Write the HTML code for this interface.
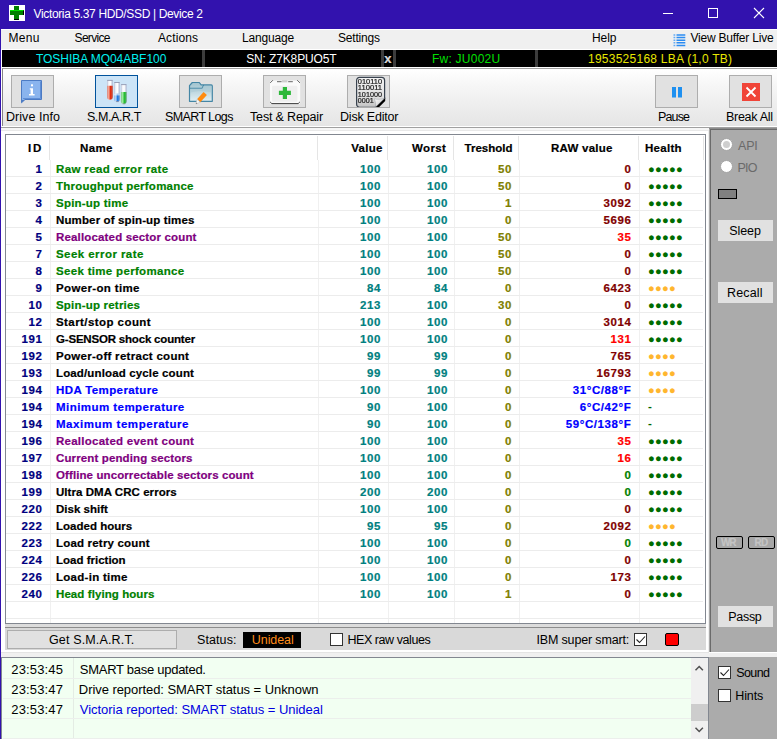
<!DOCTYPE html>
<html lang="en"><head><meta charset="utf-8"><title>Victoria 5.37 HDD/SSD | Device 2</title>
<style>
html,body{margin:0;padding:0;background:#fff}
body{width:777px;height:739px;overflow:hidden;position:relative;font-family:'Liberation Sans',sans-serif}
#win{position:absolute;left:0;top:0;width:777px;height:739px;overflow:hidden;background:#fff}
#win *{box-sizing:border-box}
.t{position:absolute;white-space:pre;line-height:16px;height:16px}
.b{font-weight:700;-webkit-text-stroke:.2px}
.lb{position:absolute;left:0;top:0;width:1px;height:739px;background:#3212ae}
.titlebar{position:absolute;left:0;top:0;width:777px;height:29px;background:#3212ae}
.appicon{position:absolute;left:9px;top:5px;width:16px;height:16px;background:#fff}
.appicon i{position:absolute;display:block;background:#008000}
.appicon .v{left:5px;top:1px;width:5px;height:14px}
.appicon .h{left:1px;top:5px;width:14px;height:5px}
.appicon .hl{left:1px;top:5px;width:13px;height:1px;background:#00e000}
.appicon .vb{left:5px;top:14px;width:5px;height:1px;background:#000}
.appicon .hr{left:14px;top:6px;width:1px;height:4px;background:#000}
.wbtn{position:absolute;top:0}
.menubar{position:absolute;left:1px;top:29px;width:776px;height:21px;background:#f0f0f0;border-top:1px solid #fff;border-bottom:1px solid #fff}
.menubar .t,.infobar .t,.toolbar .t,.titlebar .t{}
.vbicon{position:absolute}
.infobar{position:absolute;left:2px;top:50px;width:775px;height:17px;background:#000}
.isep{position:absolute;top:0;width:3px;height:17px;background:#3c3c3c}
.toolbar{position:absolute;left:2px;top:68px;width:775px;height:58px;border-top:1px solid #a0a0a0;border-left:1px solid #858585;background:linear-gradient(#fff,#f6f6f6 30%,#e5e5e5)}
.tline{position:absolute;left:1px;top:126px;width:776px;height:5px;background:#f6f6f6;border-top:1px solid #fff;border-bottom:1px solid #e8e8e8}
.tline i{display:block;height:1px;background:#a0a0a0}
.tbtn{position:absolute;width:43px;height:33px;border:1px solid #adadad;background:#e1e1e1}
.tbtn.sel{border:1px solid #00529c;background:#cce4f7}
.tbtn svg{position:absolute;left:0;top:0}
.main{position:absolute;left:1px;top:131px;width:708px;height:521px;background:#fff;border-right:1px solid #eee}
.band{position:absolute;left:1px;top:652px;width:776px;height:5px;background:#f0f0f0;border-top:1px solid #e4e4e4}
.band i{position:absolute;left:708px;top:-1px;width:68px;height:1px;background:#fff}
.grid{position:absolute;width:701px;height:490px;border:1px solid #828790;background:#fff}
.hs{position:absolute;width:1px;height:24px;background:#e5e5e5}
.bs{position:absolute;width:1px;height:463px;background:#f0f0f0}
.rl{position:absolute;left:0;width:697px;height:1px;background:#ececec}
.dots{position:absolute;height:17px;line-height:17px;font-family:'Liberation Sans','DejaVu Sans',sans-serif;font-size:11.2px;letter-spacing:.22px;white-space:pre}
.dash{position:absolute;height:17px;line-height:17px;font-size:11.500px;font-weight:700;color:#006400}
.status{position:absolute;width:701px;height:26px;background:#d9d9d9;border-top:3px solid #dcdcdc}
.status:before{content:'';position:absolute;left:0;top:0;width:701px;height:1px;background:#8c8c8c}
.getbtn{position:absolute;width:170px;height:19px;border:1px solid #adadad;background:#e1e1e1}
.unideal{position:absolute;width:58px;height:16px;background:#000}
.cb{position:absolute;width:13px;height:13px;border:1px solid #333;background:#fff}
.cb svg{position:absolute;left:0;top:0}
.redbox{position:absolute;width:14px;height:13px;border:1px solid #000;border-radius:2px;background:#ff0000}
.rpanel{position:absolute;left:709px;top:128px;width:68px;height:524px;background:#ababab;border-left:2px solid #6a6a6a;border-top:2px solid #6a6a6a;border-left-color:#6a6a6a}
.rpanel:before{content:'';position:absolute;left:-2px;top:-2px;width:68px;height:1px;background:#8c8c8c}
.rpanel:after{content:'';position:absolute;left:-2px;top:-1px;width:1px;height:523px;background:#a8a8a8}
.radio{position:absolute;width:13px;height:13px;border-radius:50%;background:#fff;border:1px solid #a4a4a4}
.radio i{position:absolute;left:2px;top:2px;width:7px;height:7px;border-radius:50%;background:#cfcfcf}
.led{position:absolute;width:19px;height:10px;border:1px solid #000;background:#808080}
.pbtn{position:absolute;width:55px;height:21px;background:#e1e1e1}
.wr{position:absolute;width:27px;height:13px;border:1px solid #000;border-radius:2px;background:#a6a6a6}
.log{position:absolute;left:1px;top:657px;width:708px;height:82px;background:#f2fff2;border-top:1px solid #828790;border-left:1px solid #828790;border-right:1px solid #828790}
.lsep{position:absolute;width:1px;height:81px;background:#e4ece4}
.ll{position:absolute;width:688px;height:1px;background:#ecefec}
.sbar{position:absolute;width:17px;height:81px;background:#f0f0f0}
.thumb{position:absolute;left:0;top:46px;width:17px;height:17px;background:#cdcdcd}
.lr{position:absolute;left:709px;top:657px;width:68px;height:82px;background:#ababab}
</style></head>
<body><div id="win">
<div class="titlebar">
<div class="appicon"><i class="v"></i><i class="h"></i><i class="hl"></i><i class="vb"></i><i class="hr"></i></div>
<span class="t" style="left:33.50px;top:5.84px;font-size:12px;color:#fff;letter-spacing:-0.35px">Victoria 5.37 HDD/SSD | Device 2</span>
<svg class="wbtn" style="left:655px" width="30" height="29" viewBox="0 0 30 29"><path d="M8 13.5h10" stroke="#fff" stroke-width="1" fill="none"/></svg>
<svg class="wbtn" style="left:700px" width="30" height="29" viewBox="0 0 30 29"><rect x="8.5" y="8.5" width="9" height="9" stroke="#fff" stroke-width="1" fill="none"/></svg>
<svg class="wbtn" style="left:745px" width="30" height="29" viewBox="0 0 30 29"><path d="M9 8l10 10M19 8l-10 10" stroke="#fff" stroke-width="1.1" fill="none"/></svg>
</div>
<div class="menubar">
<span class="t" style="left:7.50px;top:-0.16px;font-size:12px;color:#000;letter-spacing:0.29px">Menu</span>
<span class="t" style="left:73.60px;top:-0.16px;font-size:12px;color:#000;letter-spacing:-0.71px">Service</span>
<span class="t" style="left:157.00px;top:-0.16px;font-size:12px;color:#000;letter-spacing:0.11px">Actions</span>
<span class="t" style="left:241.00px;top:-0.16px;font-size:12px;color:#000;letter-spacing:-0.17px">Language</span>
<span class="t" style="left:337.00px;top:-0.16px;font-size:12px;color:#000;letter-spacing:-0.19px">Settings</span>
<span class="t" style="left:591.00px;top:-0.16px;font-size:12px;color:#000;letter-spacing:-0.10px">Help</span>
<span class="t" style="left:689.40px;top:-0.16px;font-size:12px;color:#000;letter-spacing:-0.20px">View Buffer Live</span>
<svg class="vbicon" style="left:671.5px;top:3px" width="13" height="14" viewBox="0 0 13 14"><g stroke="#2b8cf2" stroke-width="1.500"><path d="M3.500 1.900h8.800M3.500 4.550h8.800M3.500 7.200h8.800M3.500 9.850h8.800M3.500 12.500h8.800"/><path d="M.5 1.900h1.800M.5 4.550h1.800M.5 7.200h1.800M.5 9.850h1.800M.5 12.500h1.800" stroke="#63abf5"/></g></svg>
</div>
<div class="infobar">
<i class="isep" style="left:200px"></i>
<i class="isep" style="left:379px"></i>
<i class="isep" style="left:391px"></i>
<i class="isep" style="left:533px"></i>
<span class="t" style="left:34.00px;top:0.84px;font-size:12px;color:#00f0f0;letter-spacing:-0.05px">TOSHIBA MQ04ABF100</span>
<span class="t" style="left:244.20px;top:0.84px;font-size:12px;color:#fff;letter-spacing:-0.13px">SN: Z7K8PUO5T</span>
<span class="t b" style="left:382.30px;top:0.50px;font-size:13px;color:#d8d8d8;letter-spacing:0.00px">x</span>
<span class="t" style="left:429.90px;top:0.84px;font-size:12px;color:#00e000;letter-spacing:0.25px">Fw: JU002U</span>
<span class="t" style="left:586.00px;top:0.84px;font-size:12px;color:#e8e800;letter-spacing:0.25px">1953525168 LBA (1,0 TB)</span>
</div>
<div class="toolbar">
<div class="tbtn" style="left:8px;top:6px"><svg width="41" height="31" viewBox="0 0 41 31"><path d="M9.500 4.500h20v19h-16.500l-3.500 3.300z" fill="#8ab4ee" stroke="#4c7bc4" stroke-width="1"/><path d="M10 26.300v-2.300h2.600z" fill="#4c7bc4"/><path d="M11 22.500h17.500v-17" fill="none" stroke="#5f8ed6" stroke-width="1"/><rect x="19" y="8.300" width="2" height="2" fill="#fff"/><path d="M17.800 12.200h3.200v5.800h1.600v1.400h-5.600v-1.400h1.600v-4.400h-0.800z" fill="#fff"/></svg></div>
<div class="tbtn sel" style="left:92px;top:6px"><svg width="41" height="31" viewBox="0 0 41 31">
<defs><linearGradient id="gt" x1="0" x2="1"><stop offset="0" stop-color="#b9c0d6"/><stop offset=".3" stop-color="#f4f6fb"/><stop offset=".6" stop-color="#ffffff"/><stop offset="1" stop-color="#aab2cc"/></linearGradient>
<linearGradient id="gr" x1="0" x2="1"><stop offset="0" stop-color="#d88a80"/><stop offset=".3" stop-color="#f6a898"/><stop offset=".6" stop-color="#e62c0c"/><stop offset="1" stop-color="#c8584a"/></linearGradient>
<linearGradient id="gb" x1="0" x2="1"><stop offset="0" stop-color="#8ab8ee"/><stop offset=".3" stop-color="#b6d6f8"/><stop offset=".6" stop-color="#1e78e0"/><stop offset="1" stop-color="#6a9ad8"/></linearGradient>
<linearGradient id="gbv" x1="0" y1="0" x2="0" y2="1"><stop offset="0" stop-color="#fff" stop-opacity=".85"/><stop offset=".5" stop-color="#fff" stop-opacity="0"/></linearGradient>
<linearGradient id="gg" x1="0" x2="1"><stop offset="0" stop-color="#78c880"/><stop offset=".3" stop-color="#9eeaa0"/><stop offset=".6" stop-color="#22c030"/><stop offset="1" stop-color="#5aa868"/></linearGradient></defs>
<path d="M11 4.200h5.800v16.600a2.900 2.900 0 0 1-5.800 0z" fill="url(#gt)"/><path d="M11 9.800h5.800v11a2.900 2.900 0 0 1-5.800 0z" fill="url(#gr)"/><path d="M11.200 4.400h5.400" stroke="#8e96b0" stroke-width=".9"/>
<path d="M18.100 6.300h5.700v16.700a2.850 2.850 0 0 1-5.700 0z" fill="url(#gt)"/><path d="M18.100 17.800h5.700v5.200a2.850 2.850 0 0 1-5.700 0z" fill="url(#gb)"/><path d="M18.100 17.800h5.700v5h-5.700z" fill="url(#gbv)"/><path d="M18.300 6.500h5.300" stroke="#8e96b0" stroke-width=".9"/><path d="M20 25.600h2.600" stroke="#8a8a9a" stroke-width=".8"/>
<path d="M24.900 8.400h5.700v16.700a2.850 2.850 0 0 1-5.700 0z" fill="url(#gt)"/><path d="M24.900 15.900h5.700v9.200a2.850 2.850 0 0 1-5.700 0z" fill="url(#gg)"/><path d="M25.100 8.600h5.300" stroke="#8e96b0" stroke-width=".9"/><path d="M26.600 27.800h2.600" stroke="#8a8a9a" stroke-width=".8"/>
</svg></div>
<div class="tbtn" style="left:176px;top:6px"><svg width="41" height="31" viewBox="0 0 41 31">
<defs><linearGradient id="gf" x1="0" y1="0" x2="0" y2="1"><stop offset="0" stop-color="#a2c3ce"/><stop offset=".45" stop-color="#bcd6de"/><stop offset="1" stop-color="#e2eff3"/></linearGradient></defs>
<path d="M9.500 25.300v-15.600l2.800-3.200h7l1.800 2.400h10.200a1 1 0 0 1 1 1v15.400z" fill="url(#gf)" stroke="#4486a5" stroke-width="1.200" stroke-linejoin="round"/>
<path d="M9.800 12.300h12.300l1.600-3.200" fill="none" stroke="#4486a5" stroke-width="1.100"/>
<path d="M10.500 16.500q9-3 21.300 0v-6.500h-8.500l-1.200 2.800h-11.600z" fill="#a9c9d3" opacity=".55"/>
<path d="M23.600 16l3.300 3-6.600 7.200-3.300-3z" fill="#ff8c10"/><path d="M17 23.200l3.300 3-4.400 1.800z" fill="#f6f6f6" stroke="#b8b8b8" stroke-width=".5"/><path d="M15.900 28l1.500-.6-1-.9z" fill="#707070"/>
</svg></div>
<div class="tbtn" style="left:260px;top:6px"><svg width="41" height="31" viewBox="0 0 41 31">
<rect x="6" y="4.600" width="30.200" height="23.400" rx="1.500" fill="#fafafa"/>
<rect x="8.100" y="9.800" width="25.200" height="16" rx="1" fill="#efefef"/>
<path d="M6.200 6.900l2.700-2.700M13 5.700h4.600M24.200 5.700h4.600M33.200 4.200l2.800 2.700" stroke="#555" stroke-width=".9" fill="none"/>
<rect x="18" y="4.200" width="5.400" height="2.200" fill="#cfcfcf"/>
<path d="M6.200 26l1.600 1.600h26.400l1.600-1.600" stroke="#3c3c3c" stroke-width="1" fill="none"/>
<path d="M18.800 11h4.200v3.800h3.900v4.200h-3.900v4h-4.200v-4h-3.900v-4.200h3.900z" fill="#2db83a"/>
</svg></div>
<div class="tbtn" style="left:344px;top:6px"><svg width="41" height="31" viewBox="0 0 41 31">
<defs><linearGradient id="gp" x1="0" y1="0" x2="0" y2="1"><stop offset="0" stop-color="#f4f4f4"/><stop offset=".65" stop-color="#e0e0e0"/><stop offset="1" stop-color="#c2c2c2"/></linearGradient>
<linearGradient id="gc" x1="0" y1="0" x2="1" y2="1"><stop offset="0" stop-color="#ffffff"/><stop offset="1" stop-color="#bdbdbd"/></linearGradient></defs>
<path d="M11.600 1.400h22a3 3 0 0 1 3 3v18.300l-9.300 8.600h-15.700a3 3 0 0 1-3-3v-23.900a3 3 0 0 1 3-3z" fill="url(#gp)" stroke="#39434f" stroke-width="1.200"/>
<path d="M37.200 21.500v3.500l-6.300 6.300h-4.200z" fill="#000"/>
<path d="M26.200 22.700c3.200 1 7.300.6 10.400-.4l-9.300 9c.6-3 .2-6-1.100-8.600z" fill="url(#gc)" stroke="#8a9098" stroke-width=".4"/>
<g font-family="'Liberation Sans', sans-serif" font-size="6.600" fill="#1c1c1c" stroke="#1c1c1c" stroke-width=".2" style="filter:grayscale(1)">
<text x="9.800" y="7.700" textLength="24.300" lengthAdjust="spacingAndGlyphs">010110</text>
<text x="9.800" y="14.300" textLength="24.300" lengthAdjust="spacingAndGlyphs">110011</text>
<text x="9.800" y="20.800" textLength="24.300" lengthAdjust="spacingAndGlyphs">101000</text>
<text x="9.800" y="27" textLength="15.800" lengthAdjust="spacingAndGlyphs">0001</text></g>
</svg></div>
<div class="tbtn" style="left:652px;top:6px"><svg width="41" height="31" viewBox="0 0 41 31"><rect x="16" y="11" width="4" height="10.500" fill="#1e90f0"/><rect x="22" y="11" width="4" height="10.500" fill="#1e90f0"/></svg></div>
<div class="tbtn" style="left:726px;top:6px"><svg width="41" height="31" viewBox="0 0 41 31"><rect x="12" y="7" width="18" height="18" fill="#f04438"/><path d="M16.500 11.500l9 9M25.500 11.500l-9 9" stroke="#fff" stroke-width="1.800" fill="none"/></svg></div>
<span class="t" style="left:3.00px;top:39.67px;font-size:12.5px;color:#000;letter-spacing:0.05px">Drive Info</span>
<span class="t" style="left:83.90px;top:39.67px;font-size:12.5px;color:#000;letter-spacing:-0.40px">S.M.A.R.T</span>
<span class="t" style="left:162.00px;top:39.67px;font-size:12.5px;color:#000;letter-spacing:-0.61px">SMART Logs</span>
<span class="t" style="left:247.00px;top:39.67px;font-size:12.5px;color:#000;letter-spacing:-0.16px">Test &amp; Repair</span>
<span class="t" style="left:337.00px;top:39.67px;font-size:12.5px;color:#000;letter-spacing:-0.19px">Disk Editor</span>
<span class="t" style="left:655.00px;top:39.67px;font-size:12.5px;color:#000;letter-spacing:-0.87px">Pause</span>
<span class="t" style="left:723.00px;top:39.67px;font-size:12.5px;color:#000;letter-spacing:-0.28px">Break All</span>
</div>
<div class="tline"><i></i></div>
<div class="main">
<div class="grid" style="left:4px;top:3px">
<i class="hs" style="left:43px;top:1px"></i>
<i class="hs" style="left:311px;top:1px"></i>
<i class="hs" style="left:381px;top:1px"></i>
<i class="hs" style="left:447px;top:1px"></i>
<i class="hs" style="left:512px;top:1px"></i>
<i class="hs" style="left:632px;top:1px"></i>
<i class="hs" style="left:697px;top:1px"></i>
<i class="bs" style="left:44px;top:25px"></i>
<i class="bs" style="left:312px;top:25px"></i>
<i class="bs" style="left:382px;top:25px"></i>
<i class="bs" style="left:448px;top:25px"></i>
<i class="bs" style="left:513px;top:25px"></i>
<i class="bs" style="left:633px;top:25px"></i>
<span class="t b" style="left:22.00px;top:5.02px;font-size:11.5px;color:#000;letter-spacing:1.80px">ID</span>
<span class="t b" style="left:74.00px;top:5.02px;font-size:11.5px;color:#000;letter-spacing:0.36px">Name</span>
<span class="t b" style="left:345.20px;top:5.02px;font-size:11.5px;color:#000;letter-spacing:0.29px">Value</span>
<span class="t b" style="left:406.00px;top:5.02px;font-size:11.5px;color:#000;letter-spacing:0.36px">Worst</span>
<span class="t b" style="left:458.60px;top:5.02px;font-size:11.5px;color:#000;letter-spacing:-0.00px">Treshold</span>
<span class="t b" style="left:545.00px;top:5.02px;font-size:11.5px;color:#000;letter-spacing:0.25px">RAW value</span>
<span class="t b" style="left:639.00px;top:5.02px;font-size:11.5px;color:#000;letter-spacing:0.30px">Health</span>
<i class="rl" style="top:41px"></i>
<span class="t b" style="left:29.40px;top:26.02px;font-size:11.5px;color:#000080;letter-spacing:0.60px">1</span>
<span class="t b" style="left:50.00px;top:26.02px;font-size:11.5px;color:#008000;letter-spacing:0.37px">Raw read error rate</span>
<span class="t b" style="left:354.11px;top:26.02px;font-size:11.5px;color:#008080;letter-spacing:0.60px">100</span>
<span class="t b" style="left:421.11px;top:26.02px;font-size:11.5px;color:#008080;letter-spacing:0.60px">100</span>
<span class="t b" style="left:492.11px;top:26.02px;font-size:11.5px;color:#808000;letter-spacing:0.60px">50</span>
<span class="t b" style="left:618.40px;top:26.02px;font-size:11.5px;color:#800000;letter-spacing:0.60px">0</span>
<span class="dots" style="left:642px;top:25.7px;color:#006c00">●●●●●</span>
<i class="rl" style="top:58px"></i>
<span class="t b" style="left:29.40px;top:43.02px;font-size:11.5px;color:#000080;letter-spacing:0.60px">2</span>
<span class="t b" style="left:50.00px;top:43.02px;font-size:11.5px;color:#008000;letter-spacing:0.23px">Throughput perfomance</span>
<span class="t b" style="left:354.11px;top:43.02px;font-size:11.5px;color:#008080;letter-spacing:0.60px">100</span>
<span class="t b" style="left:421.11px;top:43.02px;font-size:11.5px;color:#008080;letter-spacing:0.60px">100</span>
<span class="t b" style="left:492.11px;top:43.02px;font-size:11.5px;color:#808000;letter-spacing:0.60px">50</span>
<span class="t b" style="left:618.40px;top:43.02px;font-size:11.5px;color:#800000;letter-spacing:0.60px">0</span>
<span class="dots" style="left:642px;top:42.7px;color:#006c00">●●●●●</span>
<i class="rl" style="top:75px"></i>
<span class="t b" style="left:29.40px;top:60.02px;font-size:11.5px;color:#000080;letter-spacing:0.60px">3</span>
<span class="t b" style="left:50.00px;top:60.02px;font-size:11.5px;color:#008000;letter-spacing:0.22px">Spin-up time</span>
<span class="t b" style="left:354.11px;top:60.02px;font-size:11.5px;color:#008080;letter-spacing:0.60px">100</span>
<span class="t b" style="left:421.11px;top:60.02px;font-size:11.5px;color:#008080;letter-spacing:0.60px">100</span>
<span class="t b" style="left:499.10px;top:60.02px;font-size:11.5px;color:#808000;letter-spacing:0.60px">1</span>
<span class="t b" style="left:597.42px;top:60.02px;font-size:11.5px;color:#800000;letter-spacing:0.60px">3092</span>
<span class="dots" style="left:642px;top:59.7px;color:#006c00">●●●●●</span>
<i class="rl" style="top:92px"></i>
<span class="t b" style="left:29.40px;top:77.02px;font-size:11.5px;color:#000080;letter-spacing:0.60px">4</span>
<span class="t b" style="left:50.00px;top:77.02px;font-size:11.5px;color:#000;letter-spacing:0.13px">Number of spin-up times</span>
<span class="t b" style="left:354.11px;top:77.02px;font-size:11.5px;color:#008080;letter-spacing:0.60px">100</span>
<span class="t b" style="left:421.11px;top:77.02px;font-size:11.5px;color:#008080;letter-spacing:0.60px">100</span>
<span class="t b" style="left:499.10px;top:77.02px;font-size:11.5px;color:#808000;letter-spacing:0.60px">0</span>
<span class="t b" style="left:597.42px;top:77.02px;font-size:11.5px;color:#800000;letter-spacing:0.60px">5696</span>
<span class="dots" style="left:642px;top:76.7px;color:#006c00">●●●●●</span>
<i class="rl" style="top:109px"></i>
<span class="t b" style="left:29.40px;top:94.02px;font-size:11.5px;color:#000080;letter-spacing:0.60px">5</span>
<span class="t b" style="left:50.00px;top:94.02px;font-size:11.5px;color:#800080;letter-spacing:0.16px">Reallocated sector count</span>
<span class="t b" style="left:354.11px;top:94.02px;font-size:11.5px;color:#008080;letter-spacing:0.60px">100</span>
<span class="t b" style="left:421.11px;top:94.02px;font-size:11.5px;color:#008080;letter-spacing:0.60px">100</span>
<span class="t b" style="left:492.11px;top:94.02px;font-size:11.5px;color:#808000;letter-spacing:0.60px">50</span>
<span class="t b" style="left:611.41px;top:94.02px;font-size:11.5px;color:#ff0000;letter-spacing:0.60px">35</span>
<span class="dots" style="left:642px;top:93.7px;color:#006c00">●●●●●</span>
<i class="rl" style="top:126px"></i>
<span class="t b" style="left:29.40px;top:111.02px;font-size:11.5px;color:#000080;letter-spacing:0.60px">7</span>
<span class="t b" style="left:50.00px;top:111.02px;font-size:11.5px;color:#008000;letter-spacing:0.44px">Seek error rate</span>
<span class="t b" style="left:354.11px;top:111.02px;font-size:11.5px;color:#008080;letter-spacing:0.60px">100</span>
<span class="t b" style="left:421.11px;top:111.02px;font-size:11.5px;color:#008080;letter-spacing:0.60px">100</span>
<span class="t b" style="left:492.11px;top:111.02px;font-size:11.5px;color:#808000;letter-spacing:0.60px">50</span>
<span class="t b" style="left:618.40px;top:111.02px;font-size:11.5px;color:#800000;letter-spacing:0.60px">0</span>
<span class="dots" style="left:642px;top:110.7px;color:#006c00">●●●●●</span>
<i class="rl" style="top:143px"></i>
<span class="t b" style="left:29.40px;top:128.02px;font-size:11.5px;color:#000080;letter-spacing:0.60px">8</span>
<span class="t b" style="left:50.00px;top:128.02px;font-size:11.5px;color:#008000;letter-spacing:0.32px">Seek time perfomance</span>
<span class="t b" style="left:354.11px;top:128.02px;font-size:11.5px;color:#008080;letter-spacing:0.60px">100</span>
<span class="t b" style="left:421.11px;top:128.02px;font-size:11.5px;color:#008080;letter-spacing:0.60px">100</span>
<span class="t b" style="left:492.11px;top:128.02px;font-size:11.5px;color:#808000;letter-spacing:0.60px">50</span>
<span class="t b" style="left:618.40px;top:128.02px;font-size:11.5px;color:#800000;letter-spacing:0.60px">0</span>
<span class="dots" style="left:642px;top:127.7px;color:#006c00">●●●●●</span>
<i class="rl" style="top:160px"></i>
<span class="t b" style="left:29.40px;top:145.02px;font-size:11.5px;color:#000080;letter-spacing:0.60px">9</span>
<span class="t b" style="left:50.00px;top:145.02px;font-size:11.5px;color:#000;letter-spacing:0.35px">Power-on time</span>
<span class="t b" style="left:361.11px;top:145.02px;font-size:11.5px;color:#008080;letter-spacing:0.60px">84</span>
<span class="t b" style="left:428.11px;top:145.02px;font-size:11.5px;color:#008080;letter-spacing:0.60px">84</span>
<span class="t b" style="left:499.10px;top:145.02px;font-size:11.5px;color:#808000;letter-spacing:0.60px">0</span>
<span class="t b" style="left:597.42px;top:145.02px;font-size:11.5px;color:#800000;letter-spacing:0.60px">6423</span>
<span class="dots" style="left:642px;top:144.7px;color:#ffb62e">●●●●</span>
<i class="rl" style="top:177px"></i>
<span class="t b" style="left:22.41px;top:162.02px;font-size:11.5px;color:#000080;letter-spacing:0.60px">10</span>
<span class="t b" style="left:50.00px;top:162.02px;font-size:11.5px;color:#008000;letter-spacing:0.20px">Spin-up retries</span>
<span class="t b" style="left:354.11px;top:162.02px;font-size:11.5px;color:#008080;letter-spacing:0.60px">213</span>
<span class="t b" style="left:421.11px;top:162.02px;font-size:11.5px;color:#008080;letter-spacing:0.60px">100</span>
<span class="t b" style="left:492.11px;top:162.02px;font-size:11.5px;color:#808000;letter-spacing:0.60px">30</span>
<span class="t b" style="left:618.40px;top:162.02px;font-size:11.5px;color:#800000;letter-spacing:0.60px">0</span>
<span class="dots" style="left:642px;top:161.7px;color:#006c00">●●●●●</span>
<i class="rl" style="top:194px"></i>
<span class="t b" style="left:22.41px;top:179.02px;font-size:11.5px;color:#000080;letter-spacing:0.60px">12</span>
<span class="t b" style="left:50.00px;top:179.02px;font-size:11.5px;color:#000;letter-spacing:0.43px">Start/stop count</span>
<span class="t b" style="left:354.11px;top:179.02px;font-size:11.5px;color:#008080;letter-spacing:0.60px">100</span>
<span class="t b" style="left:421.11px;top:179.02px;font-size:11.5px;color:#008080;letter-spacing:0.60px">100</span>
<span class="t b" style="left:499.10px;top:179.02px;font-size:11.5px;color:#808000;letter-spacing:0.60px">0</span>
<span class="t b" style="left:597.42px;top:179.02px;font-size:11.5px;color:#800000;letter-spacing:0.60px">3014</span>
<span class="dots" style="left:642px;top:178.7px;color:#006c00">●●●●●</span>
<i class="rl" style="top:211px"></i>
<span class="t b" style="left:15.41px;top:196.02px;font-size:11.5px;color:#000080;letter-spacing:0.60px">191</span>
<span class="t b" style="left:50.00px;top:196.02px;font-size:11.5px;color:#000;letter-spacing:-0.19px">G-SENSOR shock counter</span>
<span class="t b" style="left:354.11px;top:196.02px;font-size:11.5px;color:#008080;letter-spacing:0.60px">100</span>
<span class="t b" style="left:421.11px;top:196.02px;font-size:11.5px;color:#008080;letter-spacing:0.60px">100</span>
<span class="t b" style="left:499.10px;top:196.02px;font-size:11.5px;color:#808000;letter-spacing:0.60px">0</span>
<span class="t b" style="left:604.41px;top:196.02px;font-size:11.5px;color:#ff0000;letter-spacing:0.60px">131</span>
<span class="dots" style="left:642px;top:195.7px;color:#006c00">●●●●●</span>
<i class="rl" style="top:228px"></i>
<span class="t b" style="left:15.41px;top:213.02px;font-size:11.5px;color:#000080;letter-spacing:0.60px">192</span>
<span class="t b" style="left:50.00px;top:213.02px;font-size:11.5px;color:#000;letter-spacing:0.29px">Power-off retract count</span>
<span class="t b" style="left:361.11px;top:213.02px;font-size:11.5px;color:#008080;letter-spacing:0.60px">99</span>
<span class="t b" style="left:428.11px;top:213.02px;font-size:11.5px;color:#008080;letter-spacing:0.60px">99</span>
<span class="t b" style="left:499.10px;top:213.02px;font-size:11.5px;color:#808000;letter-spacing:0.60px">0</span>
<span class="t b" style="left:604.41px;top:213.02px;font-size:11.5px;color:#800000;letter-spacing:0.60px">765</span>
<span class="dots" style="left:642px;top:212.7px;color:#ffb62e">●●●●</span>
<i class="rl" style="top:245px"></i>
<span class="t b" style="left:15.41px;top:230.02px;font-size:11.5px;color:#000080;letter-spacing:0.60px">193</span>
<span class="t b" style="left:50.00px;top:230.02px;font-size:11.5px;color:#000;letter-spacing:0.14px">Load/unload cycle count</span>
<span class="t b" style="left:361.11px;top:230.02px;font-size:11.5px;color:#008080;letter-spacing:0.60px">99</span>
<span class="t b" style="left:428.11px;top:230.02px;font-size:11.5px;color:#008080;letter-spacing:0.60px">99</span>
<span class="t b" style="left:499.10px;top:230.02px;font-size:11.5px;color:#808000;letter-spacing:0.60px">0</span>
<span class="t b" style="left:590.42px;top:230.02px;font-size:11.5px;color:#800000;letter-spacing:0.60px">16793</span>
<span class="dots" style="left:642px;top:229.7px;color:#ffb62e">●●●●</span>
<i class="rl" style="top:262px"></i>
<span class="t b" style="left:15.41px;top:247.02px;font-size:11.5px;color:#000080;letter-spacing:0.60px">194</span>
<span class="t b" style="left:50.00px;top:247.02px;font-size:11.5px;color:#0000ff;letter-spacing:0.39px">HDA Temperature</span>
<span class="t b" style="left:354.11px;top:247.02px;font-size:11.5px;color:#008080;letter-spacing:0.60px">100</span>
<span class="t b" style="left:421.11px;top:247.02px;font-size:11.5px;color:#008080;letter-spacing:0.60px">100</span>
<span class="t b" style="left:499.10px;top:247.02px;font-size:11.5px;color:#808000;letter-spacing:0.60px">0</span>
<span class="t b" style="left:566.69px;top:247.02px;font-size:11.5px;color:#0000ff;letter-spacing:0.60px">31°C/88°F</span>
<span class="dots" style="left:642px;top:246.7px;color:#ffb62e">●●●●</span>
<i class="rl" style="top:279px"></i>
<span class="t b" style="left:15.41px;top:264.02px;font-size:11.5px;color:#000080;letter-spacing:0.60px">194</span>
<span class="t b" style="left:50.00px;top:264.02px;font-size:11.5px;color:#0000ff;letter-spacing:0.45px">Minimum temperature</span>
<span class="t b" style="left:361.11px;top:264.02px;font-size:11.5px;color:#008080;letter-spacing:0.60px">90</span>
<span class="t b" style="left:421.11px;top:264.02px;font-size:11.5px;color:#008080;letter-spacing:0.60px">100</span>
<span class="t b" style="left:499.10px;top:264.02px;font-size:11.5px;color:#808000;letter-spacing:0.60px">0</span>
<span class="t b" style="left:573.69px;top:264.02px;font-size:11.5px;color:#0000ff;letter-spacing:0.60px">6°C/42°F</span>
<span class="dash" style="left:642px;top:263px">-</span>
<i class="rl" style="top:296px"></i>
<span class="t b" style="left:15.41px;top:281.02px;font-size:11.5px;color:#000080;letter-spacing:0.60px">194</span>
<span class="t b" style="left:50.00px;top:281.02px;font-size:11.5px;color:#0000ff;letter-spacing:0.54px">Maximum temperature</span>
<span class="t b" style="left:361.11px;top:281.02px;font-size:11.5px;color:#008080;letter-spacing:0.60px">90</span>
<span class="t b" style="left:421.11px;top:281.02px;font-size:11.5px;color:#008080;letter-spacing:0.60px">100</span>
<span class="t b" style="left:499.10px;top:281.02px;font-size:11.5px;color:#808000;letter-spacing:0.60px">0</span>
<span class="t b" style="left:559.70px;top:281.02px;font-size:11.5px;color:#0000ff;letter-spacing:0.60px">59°C/138°F</span>
<span class="dash" style="left:642px;top:280px">-</span>
<i class="rl" style="top:313px"></i>
<span class="t b" style="left:15.41px;top:298.02px;font-size:11.5px;color:#000080;letter-spacing:0.60px">196</span>
<span class="t b" style="left:50.00px;top:298.02px;font-size:11.5px;color:#800080;letter-spacing:0.25px">Reallocated event count</span>
<span class="t b" style="left:354.11px;top:298.02px;font-size:11.5px;color:#008080;letter-spacing:0.60px">100</span>
<span class="t b" style="left:421.11px;top:298.02px;font-size:11.5px;color:#008080;letter-spacing:0.60px">100</span>
<span class="t b" style="left:499.10px;top:298.02px;font-size:11.5px;color:#808000;letter-spacing:0.60px">0</span>
<span class="t b" style="left:611.41px;top:298.02px;font-size:11.5px;color:#ff0000;letter-spacing:0.60px">35</span>
<span class="dots" style="left:642px;top:297.7px;color:#006c00">●●●●●</span>
<i class="rl" style="top:330px"></i>
<span class="t b" style="left:15.41px;top:315.02px;font-size:11.5px;color:#000080;letter-spacing:0.60px">197</span>
<span class="t b" style="left:50.00px;top:315.02px;font-size:11.5px;color:#800080;letter-spacing:0.13px">Current pending sectors</span>
<span class="t b" style="left:354.11px;top:315.02px;font-size:11.5px;color:#008080;letter-spacing:0.60px">100</span>
<span class="t b" style="left:421.11px;top:315.02px;font-size:11.5px;color:#008080;letter-spacing:0.60px">100</span>
<span class="t b" style="left:499.10px;top:315.02px;font-size:11.5px;color:#808000;letter-spacing:0.60px">0</span>
<span class="t b" style="left:611.41px;top:315.02px;font-size:11.5px;color:#ff0000;letter-spacing:0.60px">16</span>
<span class="dots" style="left:642px;top:314.7px;color:#006c00">●●●●●</span>
<i class="rl" style="top:347px"></i>
<span class="t b" style="left:15.41px;top:332.02px;font-size:11.5px;color:#000080;letter-spacing:0.60px">198</span>
<span class="t b" style="left:50.00px;top:332.02px;font-size:11.5px;color:#800080;letter-spacing:0.10px">Offline uncorrectable sectors count</span>
<span class="t b" style="left:354.11px;top:332.02px;font-size:11.5px;color:#008080;letter-spacing:0.60px">100</span>
<span class="t b" style="left:421.11px;top:332.02px;font-size:11.5px;color:#008080;letter-spacing:0.60px">100</span>
<span class="t b" style="left:499.10px;top:332.02px;font-size:11.5px;color:#808000;letter-spacing:0.60px">0</span>
<span class="t b" style="left:618.40px;top:332.02px;font-size:11.5px;color:#008000;letter-spacing:0.60px">0</span>
<span class="dots" style="left:642px;top:331.7px;color:#006c00">●●●●●</span>
<i class="rl" style="top:364px"></i>
<span class="t b" style="left:15.41px;top:349.02px;font-size:11.5px;color:#000080;letter-spacing:0.60px">199</span>
<span class="t b" style="left:50.00px;top:349.02px;font-size:11.5px;color:#000;letter-spacing:0.05px">Ultra DMA CRC errors</span>
<span class="t b" style="left:354.11px;top:349.02px;font-size:11.5px;color:#008080;letter-spacing:0.60px">200</span>
<span class="t b" style="left:421.11px;top:349.02px;font-size:11.5px;color:#008080;letter-spacing:0.60px">200</span>
<span class="t b" style="left:499.10px;top:349.02px;font-size:11.5px;color:#808000;letter-spacing:0.60px">0</span>
<span class="t b" style="left:618.40px;top:349.02px;font-size:11.5px;color:#008000;letter-spacing:0.60px">0</span>
<span class="dots" style="left:642px;top:348.7px;color:#006c00">●●●●●</span>
<i class="rl" style="top:381px"></i>
<span class="t b" style="left:15.41px;top:366.02px;font-size:11.5px;color:#000080;letter-spacing:0.60px">220</span>
<span class="t b" style="left:50.00px;top:366.02px;font-size:11.5px;color:#000;letter-spacing:0.01px">Disk shift</span>
<span class="t b" style="left:354.11px;top:366.02px;font-size:11.5px;color:#008080;letter-spacing:0.60px">100</span>
<span class="t b" style="left:421.11px;top:366.02px;font-size:11.5px;color:#008080;letter-spacing:0.60px">100</span>
<span class="t b" style="left:499.10px;top:366.02px;font-size:11.5px;color:#808000;letter-spacing:0.60px">0</span>
<span class="t b" style="left:618.40px;top:366.02px;font-size:11.5px;color:#800000;letter-spacing:0.60px">0</span>
<span class="dots" style="left:642px;top:365.7px;color:#006c00">●●●●●</span>
<i class="rl" style="top:398px"></i>
<span class="t b" style="left:15.41px;top:383.02px;font-size:11.5px;color:#000080;letter-spacing:0.60px">222</span>
<span class="t b" style="left:50.00px;top:383.02px;font-size:11.5px;color:#000;letter-spacing:0.02px">Loaded hours</span>
<span class="t b" style="left:361.11px;top:383.02px;font-size:11.5px;color:#008080;letter-spacing:0.60px">95</span>
<span class="t b" style="left:428.11px;top:383.02px;font-size:11.5px;color:#008080;letter-spacing:0.60px">95</span>
<span class="t b" style="left:499.10px;top:383.02px;font-size:11.5px;color:#808000;letter-spacing:0.60px">0</span>
<span class="t b" style="left:597.42px;top:383.02px;font-size:11.5px;color:#800000;letter-spacing:0.60px">2092</span>
<span class="dots" style="left:642px;top:382.7px;color:#ffb62e">●●●●</span>
<i class="rl" style="top:415px"></i>
<span class="t b" style="left:15.41px;top:400.02px;font-size:11.5px;color:#000080;letter-spacing:0.60px">223</span>
<span class="t b" style="left:50.00px;top:400.02px;font-size:11.5px;color:#000;letter-spacing:0.19px">Load retry count</span>
<span class="t b" style="left:354.11px;top:400.02px;font-size:11.5px;color:#008080;letter-spacing:0.60px">100</span>
<span class="t b" style="left:421.11px;top:400.02px;font-size:11.5px;color:#008080;letter-spacing:0.60px">100</span>
<span class="t b" style="left:499.10px;top:400.02px;font-size:11.5px;color:#808000;letter-spacing:0.60px">0</span>
<span class="t b" style="left:618.40px;top:400.02px;font-size:11.5px;color:#008000;letter-spacing:0.60px">0</span>
<span class="dots" style="left:642px;top:399.7px;color:#006c00">●●●●●</span>
<i class="rl" style="top:432px"></i>
<span class="t b" style="left:15.41px;top:417.02px;font-size:11.5px;color:#000080;letter-spacing:0.60px">224</span>
<span class="t b" style="left:50.00px;top:417.02px;font-size:11.5px;color:#000;letter-spacing:-0.00px">Load friction</span>
<span class="t b" style="left:354.11px;top:417.02px;font-size:11.5px;color:#008080;letter-spacing:0.60px">100</span>
<span class="t b" style="left:421.11px;top:417.02px;font-size:11.5px;color:#008080;letter-spacing:0.60px">100</span>
<span class="t b" style="left:499.10px;top:417.02px;font-size:11.5px;color:#808000;letter-spacing:0.60px">0</span>
<span class="t b" style="left:618.40px;top:417.02px;font-size:11.5px;color:#800000;letter-spacing:0.60px">0</span>
<span class="dots" style="left:642px;top:416.7px;color:#006c00">●●●●●</span>
<i class="rl" style="top:449px"></i>
<span class="t b" style="left:15.41px;top:434.02px;font-size:11.5px;color:#000080;letter-spacing:0.60px">226</span>
<span class="t b" style="left:50.00px;top:434.02px;font-size:11.5px;color:#000;letter-spacing:0.28px">Load-in time</span>
<span class="t b" style="left:354.11px;top:434.02px;font-size:11.5px;color:#008080;letter-spacing:0.60px">100</span>
<span class="t b" style="left:421.11px;top:434.02px;font-size:11.5px;color:#008080;letter-spacing:0.60px">100</span>
<span class="t b" style="left:499.10px;top:434.02px;font-size:11.5px;color:#808000;letter-spacing:0.60px">0</span>
<span class="t b" style="left:604.41px;top:434.02px;font-size:11.5px;color:#800000;letter-spacing:0.60px">173</span>
<span class="dots" style="left:642px;top:433.7px;color:#006c00">●●●●●</span>
<i class="rl" style="top:466px"></i>
<span class="t b" style="left:15.41px;top:451.02px;font-size:11.5px;color:#000080;letter-spacing:0.60px">240</span>
<span class="t b" style="left:50.00px;top:451.02px;font-size:11.5px;color:#008000;letter-spacing:0.08px">Head flying hours</span>
<span class="t b" style="left:354.11px;top:451.02px;font-size:11.5px;color:#008080;letter-spacing:0.60px">100</span>
<span class="t b" style="left:421.11px;top:451.02px;font-size:11.5px;color:#008080;letter-spacing:0.60px">100</span>
<span class="t b" style="left:499.10px;top:451.02px;font-size:11.5px;color:#808000;letter-spacing:0.60px">1</span>
<span class="t b" style="left:618.40px;top:451.02px;font-size:11.5px;color:#800000;letter-spacing:0.60px">0</span>
<span class="dots" style="left:642px;top:450.7px;color:#006c00">●●●●●</span>
<i class="rl" style="top:483px"></i>
</div>
<div class="status" style="left:4px;top:493px">
<div class="getbtn" style="left:2px;top:3px"></div>
<span class="t" style="left:43.90px;top:4.67px;font-size:12.5px;color:#000;letter-spacing:0.16px">Get S.M.A.R.T.</span>
<span class="t" style="left:192.00px;top:4.67px;font-size:12.5px;color:#000;letter-spacing:0.09px">Status:</span>
<div class="unideal" style="left:238px;top:5px"></div>
<span class="t" style="left:246.80px;top:4.67px;font-size:12.5px;color:#ff8c1a;letter-spacing:-0.07px">Unideal</span>
<div class="cb" style="left:325px;top:6px"></div>
<span class="t" style="left:342.40px;top:4.67px;font-size:12.5px;color:#000;letter-spacing:-0.43px">HEX raw values</span>
<span class="t" style="left:531.40px;top:4.67px;font-size:12.5px;color:#000;letter-spacing:-0.15px">IBM super smart:</span>
<div class="cb" style="left:629px;top:6px"><svg width="11" height="11" viewBox="0 0 11 11"><path d="M1.500 5.500l3 3l5.500-6" stroke="#222" stroke-width="1.100" fill="none"/></svg></div>
<div class="redbox" style="left:660px;top:6px"></div>
</div>
</div>
<div class="band"><i></i></div>
<div class="rpanel">
<div class="radio" style="left:9px;top:8px"><i></i></div>
<div class="radio" style="left:9px;top:30px"></div>
<span class="t" style="left:27.00px;top:7.67px;font-size:12.5px;color:#6a6a6a;letter-spacing:-0.19px">API</span>
<span class="t" style="left:26.50px;top:29.67px;font-size:12.5px;color:#6a6a6a;letter-spacing:-0.81px">PIO</span>
<div class="led" style="left:7px;top:59px"></div>
<div class="pbtn" style="left:7px;top:90px"></div>
<div class="pbtn" style="left:7px;top:152px"></div>
<div class="pbtn" style="left:7px;top:476px"></div>
<span class="t" style="left:18.30px;top:92.67px;font-size:12.5px;color:#000;letter-spacing:-0.08px">Sleep</span>
<span class="t" style="left:16.00px;top:154.67px;font-size:12.5px;color:#000;letter-spacing:0.17px">Recall</span>
<span class="t" style="left:17.30px;top:478.67px;font-size:12.5px;color:#000;letter-spacing:-0.32px">Passp</span>
<div class="wr" style="left:5px;top:406px"></div>
<div class="wr" style="left:37px;top:406px"></div>
<span class="t b" style="left:10.00px;top:404.53px;font-size:10px;color:#c4c4c4;letter-spacing:-1.24px">WR</span>
<span class="t b" style="left:43.60px;top:404.53px;font-size:10px;color:#c4c4c4;letter-spacing:-0.82px">RD</span>
</div>
<div class="log">
<i class="lsep" style="left:71px;top:0"></i>
<i class="ll" style="left:1px;top:20px"></i>
<i class="ll" style="left:1px;top:40px"></i>
<i class="ll" style="left:1px;top:60px"></i>
<i class="ll" style="left:1px;top:80px"></i>
<span class="t" style="left:9.30px;top:3.50px;font-size:13px;color:#000;letter-spacing:0.15px">23:53:45</span>
<span class="t" style="left:77.80px;top:3.50px;font-size:13px;color:#000;letter-spacing:-0.27px">SMART base updated.</span>
<span class="t" style="left:9.30px;top:23.50px;font-size:13px;color:#000;letter-spacing:0.15px">23:53:47</span>
<span class="t" style="left:76.80px;top:23.50px;font-size:13px;color:#000;letter-spacing:-0.06px">Drive reported: SMART status = Unknown</span>
<span class="t" style="left:9.30px;top:43.50px;font-size:13px;color:#000;letter-spacing:0.15px">23:53:47</span>
<span class="t" style="left:77.80px;top:43.50px;font-size:13px;color:#0000e0;letter-spacing:-0.04px">Victoria reported: SMART status = Unideal</span>
<div class="sbar" style="left:689px;top:0"><svg width="17" height="17" viewBox="0 0 17 17" style="position:absolute;top:0;left:0"><path d="M4.500 12.200l3.700-3.700l3.700 3.700" stroke="#505050" stroke-width="1.500" fill="none"/></svg><i class="thumb"></i><svg width="17" height="17" viewBox="0 0 17 17" style="position:absolute;bottom:0;left:0"><path d="M4.500 5.800l3.700 3.700l3.700-3.700" stroke="#505050" stroke-width="1.500" fill="none"/></svg></div>
</div>
<div class="lr">
<div class="cb" style="left:9px;top:9px"><svg width="11" height="11" viewBox="0 0 11 11"><path d="M1.500 5.500l3 3l5.500-6" stroke="#222" stroke-width="1.100" fill="none"/></svg></div>
<div class="cb" style="left:9px;top:32px"></div>
<span class="t" style="left:27.30px;top:7.67px;font-size:12.5px;color:#000;letter-spacing:-0.62px">Sound</span>
<span class="t" style="left:26.30px;top:30.67px;font-size:12.5px;color:#000;letter-spacing:-0.13px">Hints</span>
</div>
<div class="lb"></div>
</div></body></html>
